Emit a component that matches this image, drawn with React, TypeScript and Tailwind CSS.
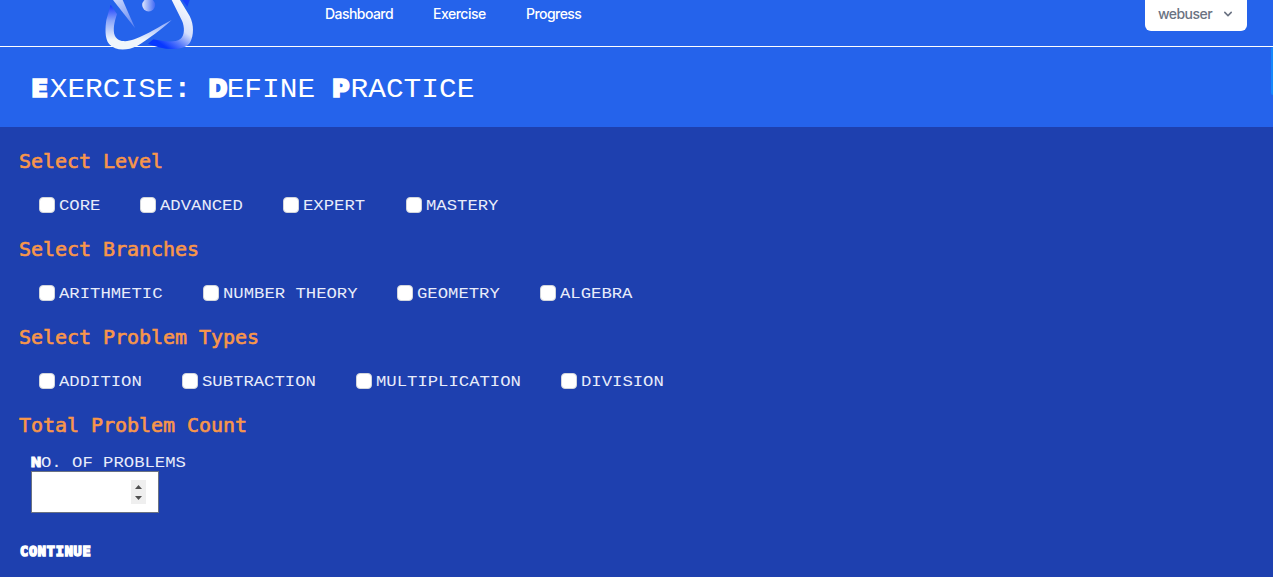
import React from "react";

const groups = [
  { title: "Select Level", items: ["CORE", "ADVANCED", "EXPERT", "MASTERY"] },
  { title: "Select Branches", items: ["ARITHMETIC", "NUMBER THEORY", "GEOMETRY", "ALGEBRA"] },
  { title: "Select Problem Types", items: ["ADDITION", "SUBTRACTION", "MULTIPLICATION", "DIVISION"] },
];

const LABEL_ADVANCE = 10.37;

function Wide({ text }: { text: string }) {
  return (
    <span className="block h-5 whitespace-pre" style={{ width: text.length * LABEL_ADVANCE }}>
      <span className="block w-max origin-left scale-x-[1.15] font-['Liberation_Mono',monospace] text-[15px] leading-[23px] text-[#e8ecfa]">
        {text}
      </span>
    </span>
  );
}

function Title({ children }: { children: React.ReactNode }) {
  return (
    <h2 className="h-7 pl-[19px] font-['DejaVu_Sans_Mono',monospace] text-[20px] leading-7 tracking-[-0.04px] text-[#f8964a] [-webkit-text-stroke:0.6px_#f8964a]">
      {children}
    </h2>
  );
}

function Cap({ children }: { children: React.ReactNode }) {
  return (
    <span className="inline-block w-[16.8px] font-['Inter',sans-serif] text-[24px] font-black leading-8 [-webkit-text-stroke:1.6px_white]">
      {children}
    </span>
  );
}

function Logo() {
  return (
    <svg className="absolute left-[90px] top-0" width="130" height="60" viewBox="0 0 390 180">
      <defs>
        <linearGradient id="l" x1="0" y1="15" x2="0" y2="120" gradientUnits="userSpaceOnUse">
          <stop offset="0" stopColor="#1238ff" />
          <stop offset="0.45" stopColor="#8ba6fa" />
          <stop offset="1" stopColor="#f0f6fb" />
        </linearGradient>
        <linearGradient id="r" x1="285" y1="20" x2="200" y2="140" gradientUnits="userSpaceOnUse">
          <stop offset="0" stopColor="#f3f7fd" />
          <stop offset="0.42" stopColor="#d5dffc" />
          <stop offset="0.68" stopColor="#5b7dfb" />
          <stop offset="0.9" stopColor="#0838ff" />
        </linearGradient>
        <linearGradient id="s" x1="80" y1="0" x2="134" y2="84" gradientUnits="userSpaceOnUse">
          <stop offset="0" stopColor="#c6d4fc" />
          <stop offset="1" stopColor="#5b81f2" />
        </linearGradient>
        <linearGradient id="d" x1="156" y1="0" x2="196" y2="0" gradientUnits="userSpaceOnUse">
          <stop offset="0" stopColor="#e0e8fd" />
          <stop offset="1" stopColor="#3f68f5" />
        </linearGradient>
      </defs>
      <path d="M69 0H98L135 84Z" fill="url(#s)" />
      <circle cx="176" cy="15" r="19.5" fill="url(#d)" />
      <path d="M277 0H299L292 20Z" fill="#1742fb" />
      <path d="M245 0H270L299 48C313 75 311 106 301 126C291 143 269 147 247 147C220 147 196 140 174 131L190 118C220 124 253 129 271 117C285 106 284 80 276 62Z" fill="url(#r)" />
      <path d="M62 14L81 42C74 62 67 91 75 108C84 126 109 127 133 118C174 102 207 80 245 60C216 87 173 119 141 138C111 153 76 153 58 133C43 116 46 80 49 60Z" fill="url(#l)" />
    </svg>
  );
}

export default function App() {
  return (
    <div className="relative flex h-[577px] w-full flex-col overflow-hidden bg-[#1e40af] text-white">
      <nav className="flex h-[47px] shrink-0 items-start justify-between border-b border-white bg-[#2563eb] pl-[325px] pr-[26px]">
        <div className="flex gap-10 pt-1 font-['Inter',sans-serif] text-[14px] font-medium leading-5">
          <a className="w-[68px] tracking-[-0.55px]">Dashboard</a>
          <a className="w-[53px] tracking-[-0.5px]">Exercise</a>
          <a className="w-[56px] tracking-[-0.55px]">Progress</a>
        </div>
        <button className="flex h-[31px] w-[102px] items-center rounded-b-md bg-white pb-1 pl-[13px] font-['Inter',sans-serif] text-[14px] font-medium leading-5 text-gray-500">
          <span className="w-[62px] text-left tracking-[-0.55px]">webuser</span>
          <svg className="h-4 w-4" viewBox="0 0 20 20" fill="currentColor">
            <path fillRule="evenodd" d="M5.293 7.293a1 1 0 011.414 0L10 10.586l3.293-3.293a1 1 0 111.414 1.414l-4 4a1 1 0 01-1.414 0l-4-4a1 1 0 010-1.414z" />
          </svg>
        </button>
      </nav>
      <Logo />
      <header className="flex h-20 shrink-0 items-start justify-between bg-[#2563eb] pl-8">
        <h1 className="origin-left scale-x-[1.053] whitespace-pre pt-[26px] font-['Liberation_Mono',monospace] text-[28px] leading-8">
          <Cap>E</Cap>XERCISE<span className="font-bold">:</span> <Cap>D</Cap>EFINE <Cap>P</Cap>RACTICE
        </h1>
        <span className="h-12 w-[2px] rounded-l bg-[#1688fb]" />
      </header>
      <main>
        {groups.map((g) => (
          <section key={g.title} className="h-[88px] pt-5">
            <Title>{g.title}</Title>
            <div className="flex gap-10 pl-[39px] pt-5">
              {g.items.map((i) => (
                <label key={i} className="flex items-center gap-1">
                  <input type="checkbox" className="h-4 w-4 appearance-none rounded border border-gray-300 bg-white" />
                  <Wide text={i} />
                </label>
              ))}
            </div>
          </section>
        ))}
        <section className="pt-5">
          <Title>Total Problem Count</Title>
          <div className="flex flex-col pl-[31px] pt-[13px]">
            <div className="flex h-5">
              <span className="w-[10.35px] font-['Inter',sans-serif] text-[13px] font-black leading-[21px] [-webkit-text-stroke:0.8px_white]">N</span>
              <Wide text="O. OF PROBLEMS" />
            </div>
            <div className="-mt-px flex h-[42px] w-32 items-center justify-end border border-gray-500 bg-white pr-3">
              <span className="flex h-6 w-[15px] flex-col items-center justify-center gap-[7px] bg-[#efefef]">
                <svg width="7" height="4" viewBox="0 0 7 4" fill="#505050"><path d="M0 4L3.5 0L7 4Z" /></svg>
                <svg width="7" height="4" viewBox="0 0 7 4" fill="#505050"><path d="M0 0L3.5 4L7 0Z" /></svg>
              </span>
            </div>
          </div>
          <button className="ml-5 mt-7 block h-5 font-['DejaVu_Sans_Mono',monospace] text-[13.5px] font-bold leading-5 tracking-[0.8px] [-webkit-text-stroke:1.5px_white]">
            CONTINUE
          </button>
        </section>
      </main>
    </div>
  );
}
